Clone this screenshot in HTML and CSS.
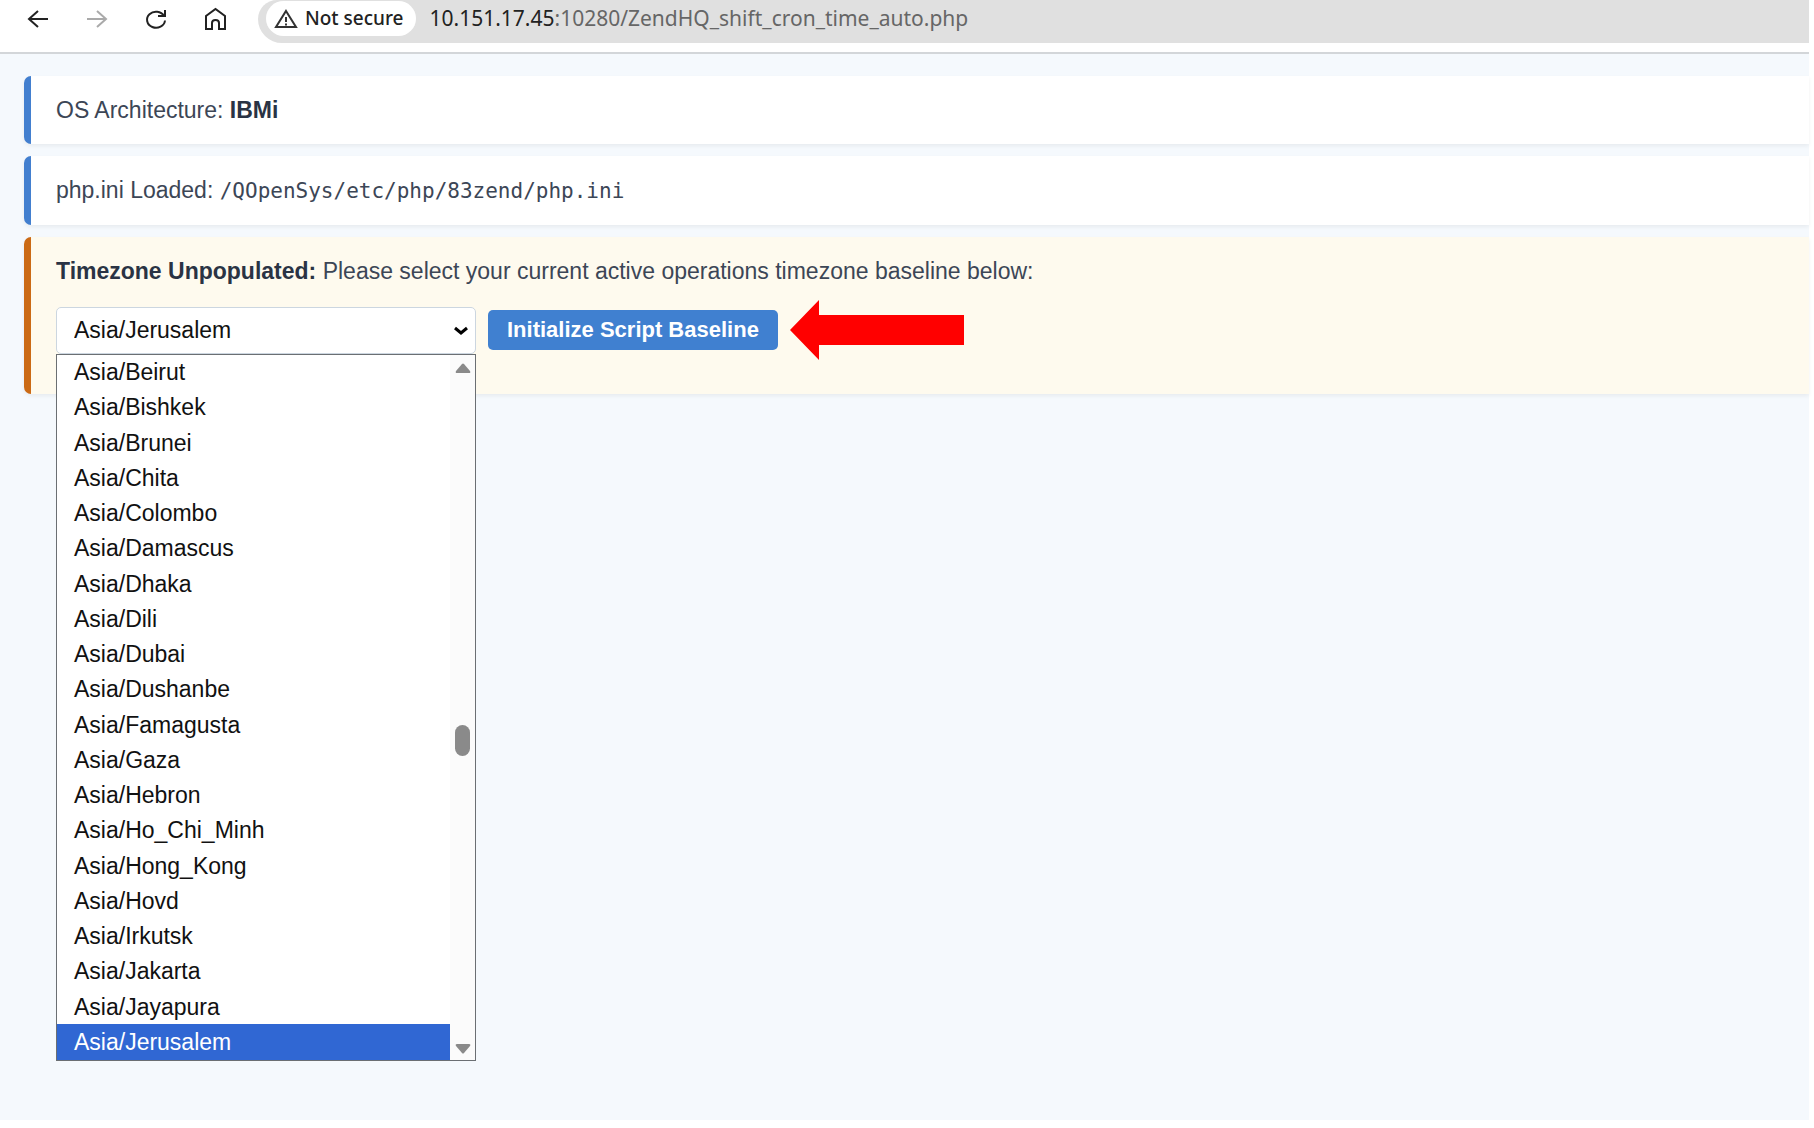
FILE: index.html
```html
<!DOCTYPE html>
<html lang="en">
<head>
<meta charset="utf-8">
<title>ZendHQ shift cron time</title>
<link rel="stylesheet" href="styles.css">
</head>
<body>
<div class="window">
  <header class="toolbar">
    <nav class="nav" aria-label="Browser">
      <button type="button" class="nav-btn" aria-label="Back"><svg viewBox="0 0 24 24"><path d="M22 12H3M12 4L3 12l9 8"/></svg></button>
      <button type="button" class="nav-btn nav-btn-off" aria-label="Forward"><svg viewBox="0 0 24 24"><path d="M2 12h19M12 4l9 8-9 8"/></svg></button>
      <button type="button" class="nav-btn" aria-label="Reload"><svg viewBox="0 0 24 24"><path d="M20 9A9 8 0 1 0 21 13.500M21 3v6h-7"/></svg></button>
      <button type="button" class="nav-btn" aria-label="Home"><svg viewBox="0 0 24 24"><path d="M3 22V9l9.500-7L22 9v13h-6v-6q0-3-3.500-3T9 16v6z"/></svg></button>
    </nav>
    <div class="address">
      <button type="button" class="security"><svg viewBox="0 0 24 20"><path d="M12 2L22 18H2zM12 8v5M12 14.500v2"/></svg>Not secure</button>
      <span class="url"><span class="host">10.151.17.45</span>:10280/ZendHQ_shift_cron_time_auto.php</span>
    </div>
  </header>
  <main class="page">
    <section class="card">OS Architecture: <strong>IBMi</strong></section>
    <section class="card">php.ini Loaded: <code>/QOpenSys/etc/php/83zend/php.ini</code></section>
    <section class="card card-warn">
      <label for="tz"><strong>Timezone Unpopulated:</strong> Please select your current active operations timezone baseline below:</label>
      <form class="controls">
        <div class="picker">
          <select id="tz" class="select"><option>Asia/Jerusalem</option></select>
          <svg class="chevron" viewBox="0 0 16 10"><path d="M2 2l6 5 6-5"/></svg>
          <div class="popup">
            <ul class="options" role="listbox" aria-label="Timezone">
              <li role="option">Asia/Beirut</li>
              <li role="option">Asia/Bishkek</li>
              <li role="option">Asia/Brunei</li>
              <li role="option">Asia/Chita</li>
              <li role="option">Asia/Colombo</li>
              <li role="option">Asia/Damascus</li>
              <li role="option">Asia/Dhaka</li>
              <li role="option">Asia/Dili</li>
              <li role="option">Asia/Dubai</li>
              <li role="option">Asia/Dushanbe</li>
              <li role="option">Asia/Famagusta</li>
              <li role="option">Asia/Gaza</li>
              <li role="option">Asia/Hebron</li>
              <li role="option">Asia/Ho_Chi_Minh</li>
              <li role="option">Asia/Hong_Kong</li>
              <li role="option">Asia/Hovd</li>
              <li role="option">Asia/Irkutsk</li>
              <li role="option">Asia/Jakarta</li>
              <li role="option">Asia/Jayapura</li>
              <li role="option" class="selected" aria-selected="true">Asia/Jerusalem</li>
            </ul>
            <div class="scrollbar">
              <svg class="step" viewBox="0 0 16 10"><path d="M7 1q1-1 2 0l6 7q1 2-1 2H2q-2 0-1-2z"/></svg>
              <span class="thumb"></span>
              <svg class="step" viewBox="0 0 16 10"><path d="M7 9q1 1 2 0l6-7q1-2-1-2H2Q0 0 1 2z"/></svg>
            </div>
          </div>
        </div>
        <button type="button" class="submit">Initialize Script Baseline</button>
        <svg class="pointer" viewBox="0 0 174 60"><path d="M0 30L29 0v15h145v30H29v15z"/></svg>
      </form>
    </section>
  </main>
</div>
</body>
</html>
```
FILE: styles.css
```css
* { box-sizing: border-box; }
body {
  margin: 0;
  background: #fff;
  color: #3c4656;
  font: 23px/32px "Liberation Sans", Arial, sans-serif;
}
button, select { font: inherit; }
.window {
  display: flex;
  flex-direction: column;
  min-height: calc(100vh - 8px);
  margin: 0 5px 8px 0;
  background: #f5f9fd;
}
.toolbar {
  display: flex;
  gap: 31px;
  height: 54px;
  padding-left: 26px;
  border-bottom: 2px solid #d3d6d9;
  background: #fff;
}
.nav { display: flex; gap: 35px; height: 37px; align-items: center; }
.nav-btn {
  width: 24px;
  height: 24px;
  padding: 0;
  border: 0;
  background: none;
  color: #222;
}
.nav-btn-off { color: #aaa; }
.nav-btn svg { display: block; fill: none; stroke: currentColor; stroke-width: 2; }
.address {
  display: flex;
  flex: 1;
  align-items: flex-start;
  gap: 14px;
  height: 43px;
  padding: 1px 0 0 8px;
  border-radius: 22px 0 0 28px;
  background: #e0e0e0;
}
.security {
  display: flex;
  align-items: center;
  gap: 7px;
  height: 35px;
  padding: 0 12px 0 8px;
  border: 0;
  border-radius: 18px;
  background: #fff;
  color: #222;
  font: 500 19px/35px "Noto Sans", sans-serif;
}
.security svg { width: 24px; height: 20px; fill: none; stroke: #333; stroke-width: 2; }
.url { color: #666; font: 21px/35px "Noto Sans", sans-serif; }
.host { color: #222; }
.page { display: flex; flex-direction: column; gap: 12px; padding: 22px 0 0 24px; }
.card {
  padding: 18px 25px;
  border-left: 7px solid #427fcf;
  border-radius: 7px 0 0 7px;
  background: #fff;
  box-shadow: 0 2px 4px rgba(0, 0, 0, .06);
}
.card strong { color: #2a3344; }
code { font: 21px/32px "DejaVu Sans Mono", monospace; }
.card-warn { padding-bottom: 34px; border-left-color: #cb6a15; background: #fefaee; }
.controls { display: flex; align-items: center; gap: 12px; margin-top: 13px; }
.picker { position: relative; width: 420px; }
.select {
  display: block;
  width: 100%;
  height: 47px;
  padding: 0 17px;
  border: 1px solid #ccd6e0;
  border-radius: 5px;
  appearance: none;
  background: #fff;
  color: #111;
}
.chevron {
  position: absolute;
  top: 19px;
  right: 7px;
  width: 16px;
  height: 10px;
  fill: none;
  stroke: #000;
  stroke-width: 3;
}
.popup {
  position: absolute;
  top: 100%;
  left: 0;
  display: flex;
  width: 100%;
  height: 707px;
  border: 1px solid #6b6f73;
  background: #fff;
}
.options {
  display: grid;
  flex: 1;
  grid-auto-rows: 1fr;
  margin: 0;
  padding: 0;
  list-style: none;
  color: #111;
}
.options li { display: flex; align-items: center; padding-left: 17px; }
.options .selected { background: #3067d3; color: #fff; }
.scrollbar {
  display: flex;
  flex-direction: column;
  align-items: center;
  justify-content: space-between;
  width: 25px;
  padding: 8px 0 6px;
  background: #fbfbfb;
}
.step { width: 16px; height: 10px; fill: #8a8a8a; }
.thumb { width: 15px; height: 31px; margin-top: 64px; border-radius: 8px; background: #8a8a8a; }
.submit {
  height: 40px;
  padding: 0 19px;
  border: 0;
  border-radius: 5px;
  background: #4080d0;
  color: #fff;
  font-size: 22px;
  font-weight: 700;
}
.pointer { width: 174px; height: 60px; fill: #f00; }
```
